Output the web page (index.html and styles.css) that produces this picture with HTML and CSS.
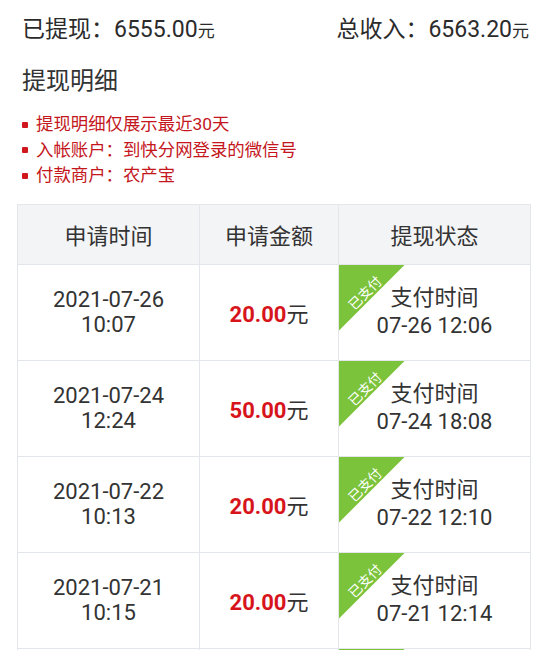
FILE: index.html
```html
<!DOCTYPE html>
<html lang="zh">
<head>
<meta charset="utf-8">
<link rel="stylesheet" href="styles.css">
</head>
<body>
<div class="page">
  <div class="summary">
    <div class="sum-item">已提现：6555.00<span class="unit">元</span></div>
    <div class="sum-item">总收入：6563.20<span class="unit">元</span></div>
  </div>
  <h2 class="title">提现明细</h2>
  <ul class="notes">
    <li>提现明细仅展示最近30天</li>
    <li>入帐账户：到快分网登录的微信号</li>
    <li>付款商户：农产宝</li>
  </ul>
  <table class="records">
    <thead>
      <tr><th class="c1">申请时间</th><th class="c2">申请金额</th><th class="c3">提现状态</th></tr>
    </thead>
    <tbody>
      <tr>
        <td class="date">2021-07-26<br>10:07</td>
        <td class="amount"><b>20.00</b>元</td>
        <td class="status"><span class="ribbon"></span><span class="ribbon-text">已支付</span>支付时间<br>07-26 12:06</td>
      </tr>
      <tr>
        <td class="date">2021-07-24<br>12:24</td>
        <td class="amount"><b>50.00</b>元</td>
        <td class="status"><span class="ribbon"></span><span class="ribbon-text">已支付</span>支付时间<br>07-24 18:08</td>
      </tr>
      <tr>
        <td class="date">2021-07-22<br>10:13</td>
        <td class="amount"><b>20.00</b>元</td>
        <td class="status"><span class="ribbon"></span><span class="ribbon-text">已支付</span>支付时间<br>07-22 12:10</td>
      </tr>
      <tr>
        <td class="date">2021-07-21<br>10:15</td>
        <td class="amount"><b>20.00</b>元</td>
        <td class="status"><span class="ribbon"></span><span class="ribbon-text">已支付</span>支付时间<br>07-21 12:14</td>
      </tr>
      <tr class="last">
        <td class="date"></td>
        <td class="amount"></td>
        <td class="status"><span class="ribbon"></span></td>
      </tr>
    </tbody>
  </table>
</div>
</body>
</html>
```

FILE: styles.css
```css
html, body {
  margin: 0;
  padding: 0;
  background: #ffffff;
}
body {
  font-family: Roboto, "Noto Sans CJK SC", sans-serif;
  color: #333333;
  overflow: hidden;
  height: 650px;
}
.page {
  padding: 0 17px 0 17px;
}
.summary {
  display: flex;
  justify-content: space-between;
  padding: 14px 2px 0 5px;
  font-size: 23px;
  line-height: 32px;
  color: #2b2b2b;
}
.unit {
  font-size: 17px;
}
.title {
  margin: 18px 0 0 5px;
  font-size: 24px;
  font-weight: 400;
  line-height: 32px;
  color: #333;
}
.notes {
  list-style: none;
  margin: 15px 0 0 0;
  padding: 0 0 0 5px;
  font-size: 17.4px;
  line-height: 25.5px;
  color: #c4161c;
}
.notes li {
  display: flex;
  align-items: center;
}
.notes li::before {
  content: "";
  width: 6px;
  height: 6px;
  background: #d0171e;
  border-radius: 1px;
  margin: 0 8px 0 0;
  flex: none;
}
.records {
  margin-top: 15px;
  width: 514px;
  border-collapse: collapse;
  table-layout: fixed;
  font-size: 22px;
  color: #333;
}
.records th, .records td {
  border: 1px solid #e3e6ea;
  text-align: center;
  padding: 0;
}
.records th {
  background: #f3f4f6;
  font-weight: 400;
  height: 59px;
}
.c1 { width: 181px; }
.c2 { width: 138px; }
.records td {
  height: 95px;
  vertical-align: middle;
}
.date {
  line-height: 25px;
}
.amount b {
  color: #d7141b;
  font-weight: 700;
}
.status {
  position: relative;
  line-height: 28px;
  overflow: hidden;
}
.ribbon {
  position: absolute;
  left: 0;
  top: 0;
  width: 66px;
  height: 66px;
  background: #7cc33c;
  clip-path: polygon(0 0, 100% 0, 0 100%);
}
.ribbon-text {
  position: absolute;
  left: -7px;
  top: 20px;
  width: 66px;
  line-height: 16px;
  font-size: 13.5px;
  color: #ffffff;
  text-align: center;
  transform: rotate(-45deg);
}
```
